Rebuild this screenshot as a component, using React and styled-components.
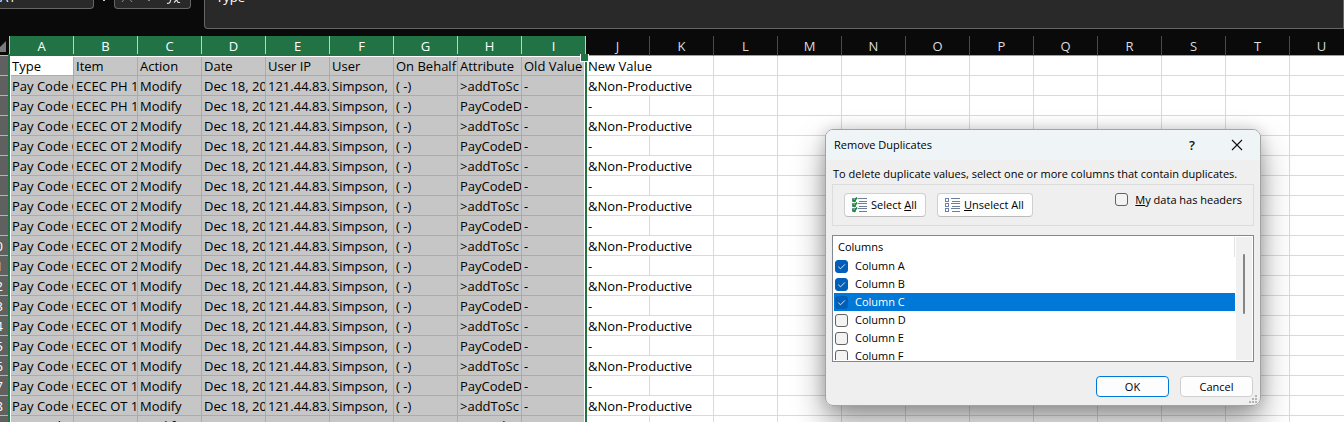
import styled, { createGlobalStyle } from 'styled-components';

const GlobalStyle = createGlobalStyle`
  :root {
    --excel-green: #217346;
    --chrome: #0a0a0a;
    --field: #292929;
    --field-border: #666666;
    --accent: #0078d7;
  }
  * {
    box-sizing: border-box;
  }
  body {
    margin: 0;
    background: #ffffff;
    overflow: hidden;
  }
`;

const Page = styled.main`
  position: relative;
  height: 100vh;
  overflow: hidden;
  font-family: 'Open Sans', 'Noto Sans', sans-serif;
`;

/* ---------- formula bar ---------- */

const FormulaBar = styled.header`
  display: flex;
  align-items: flex-start;
  height: 36px;
  background: var(--chrome);
`;

const Field = styled.div`
  display: flex;
  align-items: flex-end;
  flex: none;
  height: 9px;
  overflow: hidden;
  border: 1px solid var(--field-border);
  border-top: none;
  background: var(--field);
  color: #ffffff;
  font-size: 13px;
  line-height: 16px;
`;

const NameBox = styled(Field)`
  width: 94px;
  padding-bottom: 3px;
  border-left: none;
  border-radius: 0 0 4px 0;
`;

const FxBox = styled(Field)`
  width: 77px;
  margin-right: 13px;
  padding-left: 6px;
  border-radius: 0 0 4px 4px;
`;

const FormulaInput = styled(Field)`
  flex: 1;
  height: 29px;
  padding: 0 0 23px 11px;
  border-radius: 0 0 0 4px;
`;

const Dots = styled.div`
  width: 20px;
  height: 2px;
  display: flex;
  justify-content: center;
  &::after {
    content: '';
    width: 2px;
    height: 1px;
    background: #cccccc;
  }
`;

/* ---------- sheet ---------- */

const Sheet = styled.section`
  position: relative;
  overflow: hidden;
`;

const Grid = styled.table`
  table-layout: fixed;
  width: 1354px;
  border-collapse: separate;
  border-spacing: 0;
  color: #000000;
  font-size: 13px;
  line-height: 18px;
`;

const Corner = styled.th`
  height: 20px;
  padding: 0;
  background: var(--chrome);
  border-bottom: 1px solid #bdbdbd;
  border-right: 1px solid #bdbdbd;
  svg {
    display: block;
  }
`;

const ColumnHead = styled.th`
  height: 20px;
  padding: 1px 0 0;
  background: ${({ $active }) => ($active ? 'var(--excel-green)' : 'var(--chrome)')};
  border-bottom: 1px solid ${({ $active }) => ($active ? 'var(--excel-green)' : '#a0a0a0')};
  border-right: 1px solid ${({ $active }) => ($active ? '#b9d3c5' : '#4a4a4a')};
  color: ${({ $active }) => ($active ? '#ffffff' : '#dcdcdc')};
  font-weight: 400;
`;

const RowHead = styled.th`
  height: 20px;
  padding: 1px 0 0;
  overflow: hidden;
  background: #606060;
  border-bottom: 1px solid #b4b4b4;
  border-right: 1px solid var(--excel-green);
  color: #ffffff;
  font-weight: 400;
  div {
    display: flex;
    justify-content: flex-end;
  }
  span {
    flex: none;
    width: 27px;
    text-align: center;
  }
`;

const Cell = styled.td`
  height: 20px;
  padding: 1px 0 0 2px;
  overflow: hidden;
  white-space: nowrap;
  background: ${({ $picked, $origin }) => ($picked && !$origin ? '#c6c6c6' : '#ffffff')};
  border-right: 1px solid ${({ $picked }) => ($picked ? '#ababab' : '#dadada')};
  border-bottom: 1px solid ${({ $picked }) => ($picked ? '#ababab' : '#dadada')};
`;

const Selection = styled.div`
  position: absolute;
  top: 18px;
  bottom: -4px;
  left: 8px;
  width: 579px;
  border: 2px solid var(--excel-green);
  box-shadow: inset 0 0 0 1px #ffffff;
  pointer-events: none;
  &::after {
    content: '';
    position: absolute;
    top: -2px;
    right: -4px;
    width: 7px;
    height: 7px;
    border: 1px solid #ffffff;
    border-top: none;
    background: var(--excel-green);
  }
`;

/* ---------- dialog ---------- */

const DialogFrame = styled.div`
  position: absolute;
  top: 129px;
  left: 825px;
  width: 436px;
  border-radius: 8px;
  box-shadow: 0 16px 32px rgba(0, 0, 0, 0.4), 0 0 14px rgba(0, 0, 0, 0.16);
`;

const Dialog = styled.section`
  position: relative;
  overflow: hidden;
  border: 1px solid #a3a3a3;
  border-radius: 8px;
  background: #efefef;
  color: #000000;
  font-size: 11px;
  line-height: 16px;
`;

const TitleBar = styled.header`
  display: flex;
  align-items: center;
  height: 30px;
  padding: 0 16px 0 8px;
  background: #eff4f7;
  h1 {
    flex: 1;
    margin: 0;
    font-size: 11px;
    font-weight: 400;
  }
`;

const TitleButton = styled.button`
  display: flex;
  align-items: center;
  justify-content: center;
  width: 14px;
  height: 20px;
  margin-left: ${({ $apart }) => ($apart ? '31px' : '0')};
  padding: 0;
  border: none;
  background: none;
  color: #111111;
  font: 600 13px 'Open Sans', sans-serif;
`;

const DialogBody = styled.div`
  padding: 6px 6px 8px;
`;

const Hint = styled.p`
  margin: 0 0 2px;
  padding-left: 1px;
  white-space: nowrap;
`;

const Tools = styled.div`
  display: flex;
  align-items: flex-start;
  gap: 11px;
  height: 42px;
  margin-bottom: 9px;
  padding: 8px 11px;
  border: 1px solid #dcdcdc;
`;

const ToolButton = styled.button`
  display: flex;
  align-items: center;
  gap: 3px;
  height: 24px;
  width: ${({ $wide }) => ($wide ? '96px' : '82px')};
  padding: 0 7px;
  border: 1px solid #cfcfcf;
  border-bottom-color: #bcbcbc;
  border-radius: 4px;
  background: #fdfdfd;
  color: #000000;
  font: inherit;
  white-space: nowrap;
  svg {
    flex: none;
  }
`;

const Check = styled.input`
  appearance: none;
  flex: none;
  width: 13px;
  height: 13px;
  margin: 0;
  border: 1px solid #626262;
  border-radius: 3px;
  background: #f3f3f3;
  &:checked {
    border-color: #005fb8;
    background: #005fb8
      url("data:image/svg+xml,%3Csvg xmlns='http://www.w3.org/2000/svg' viewBox='0 0 11 11'%3E%3Cpath d='M2.3 5.7 4.5 7.8 8.9 3.4' fill='none' stroke='white' stroke-opacity='.85'/%3E%3C/svg%3E");
  }
`;

const HeadersOption = styled.label`
  display: flex;
  gap: 7px;
  margin-left: auto;
  white-space: nowrap;
  span {
    line-height: 14px;
  }
`;

const ListBox = styled.div`
  display: flex;
  height: 127px;
  padding: 1px;
  border: 1px solid #828790;
  background: #ffffff;
`;

const List = styled.div`
  flex: 1;
  overflow: hidden;
`;

const ListTitle = styled.div`
  height: 20px;
  padding-left: 4px;
  border-right: 1px solid #e2e2e2;
  line-height: 20px;
`;

const Option = styled.label`
  display: flex;
  align-items: center;
  gap: 7px;
  height: 18px;
  padding-left: 1px;
  background: ${({ $current }) => ($current ? 'var(--accent)' : 'transparent')};
  color: ${({ $current }) => ($current ? '#ffffff' : '#000000')};
`;

const ScrollTrack = styled.div`
  display: flex;
  justify-content: center;
  width: 16px;
  margin-left: 1px;
  padding-top: 17px;
  background: #f0f0f0;
  &::after {
    content: '';
    width: 2px;
    height: 60px;
    border-radius: 1px;
    background: #858585;
  }
`;

const Actions = styled.footer`
  display: flex;
  justify-content: flex-end;
  gap: 11px;
  padding: 14px 1px 0 0;
`;

const ActionButton = styled.button`
  width: 73px;
  height: 21px;
  padding: 0;
  border: 1px solid ${({ $primary }) => ($primary ? 'var(--accent)' : '#cfcfcf')};
  border-radius: 4px;
  background: #fdfdfd;
  color: #000000;
  font: inherit;
`;

const Grip = styled.svg`
  position: absolute;
  right: 2px;
  bottom: 1px;
`;

const letters = 'ABCDEFGHIJKLMNOPQRSTU'.split('');
const picked = 9;

const headings = [
  'Type',
  'Item',
  'Action',
  'Date',
  'User IP',
  'User',
  'On Behalf',
  'Attribute',
  'Old Value',
  'New Value',
];

const itemFor = (i) => {
  if (i < 2) return 'ECEC PH 1.';
  return i < 10 ? 'ECEC OT 2.' : 'ECEC OT 1.';
};

const records = Array.from({ length: 18 }, (_, i) => [
  'Pay Code C',
  itemFor(i),
  'Modify',
  'Dec 18, 20',
  '121.44.83.',
  'Simpson,',
  '( -)',
  i % 2 ? 'PayCodeD' : '>addToSc',
  '-',
  i % 2 ? '-' : '&Non-Productive',
]);

const rows = [headings, ...records];

const ListIcon = ({ checked }) => (
  <svg width="16" height="16" viewBox="0 0 16 16" aria-hidden="true">
    {[1, 6, 11].map((y) => (
      <g key={y}>
        <rect
          x="0.5"
          y={y + 0.5}
          width="3"
          height="3"
          fill="#ffffff"
          stroke={checked ? '#7d93a6' : '#6b7fb5'}
        />
        <path d={`M6 ${y + 0.5}h9M7 ${y + 3.5}h8`} stroke="#6a7f9c" />
        {checked && (
          <path
            d={`M.6 ${y + 1.2}l1.6 2L5 ${y - 0.4}`}
            fill="none"
            stroke="#0c8f2b"
            strokeWidth="1.7"
          />
        )}
      </g>
    ))}
  </svg>
);

const SheetRow = ({ values, index }) => {
  // text longer than a column runs over the empty one beside it
  const spills = values[9].length > 1;
  const empty = letters.slice(spills ? 11 : 10);
  return (
    <tr>
      <RowHead scope="row">
        <div>
          <span>{index + 1}</span>
        </div>
      </RowHead>
      {values.map((value, col) => (
        <Cell
          key={letters[col]}
          $picked={col < picked}
          $origin={index === 0 && col === 0}
          colSpan={col === 9 && spills ? 2 : 1}
        >
          {value}
        </Cell>
      ))}
      {empty.map((letter) => (
        <Cell key={letter} />
      ))}
    </tr>
  );
};

const App = () => {
  return (
    <Page>
      <GlobalStyle />
      <FormulaBar>
        <NameBox>A1</NameBox>
        <Dots />
        <FxBox>
          <svg width="64" height="8" viewBox="0 0 64 8" aria-hidden="true">
            <path d="M1 2 4-2M11 2 7-3" stroke="#8a8a8a" fill="none" />
            <path d="M26-1l2 2 4-4" stroke="#8a8a8a" fill="none" />
            <path
              d="M46 3.2q2.6.8 3.4-2L50-2M53 2.5l5-5M54.5-2l2.6 4.5h2"
              stroke="#e0e0e0"
              strokeWidth="1.2"
              fill="none"
            />
          </svg>
        </FxBox>
        <FormulaInput>Type</FormulaInput>
      </FormulaBar>

      <Sheet>
        <Grid>
          <colgroup>
            <col width="10" />
            {letters.map((letter) => (
              <col key={letter} width="64" />
            ))}
          </colgroup>
          <thead>
            <tr>
              <Corner>
                <svg width="9" height="19" viewBox="0 0 9 19" aria-hidden="true">
                  <path d="M6 5v11H-5z" fill="#7a7a7a" />
                </svg>
              </Corner>
              {letters.map((letter, i) => (
                <ColumnHead key={letter} scope="col" $active={i < picked}>
                  {letter}
                </ColumnHead>
              ))}
            </tr>
          </thead>
          <tbody>
            {rows.map((values, i) => (
              <SheetRow key={i} values={values} index={i} />
            ))}
          </tbody>
        </Grid>
        <Selection />
      </Sheet>

      <DialogFrame>
        <Dialog role="dialog" aria-labelledby="dialog-title">
          <TitleBar>
            <h1 id="dialog-title">Remove Duplicates</h1>
            <TitleButton type="button" aria-label="Help">
              ?
            </TitleButton>
            <TitleButton type="button" aria-label="Close" $apart>
              <svg width="12" height="12" viewBox="0 0 12 12" aria-hidden="true">
                <path d="M1 1l10 10M11 1 1 11" stroke="#111111" strokeWidth="1.1" />
              </svg>
            </TitleButton>
          </TitleBar>
          <DialogBody>
            <Hint>
              To delete duplicate values, select one or more columns that contain duplicates.
            </Hint>
            <Tools>
              <ToolButton type="button">
                <ListIcon checked />
                <span>
                  Select <u>A</u>ll
                </span>
              </ToolButton>
              <ToolButton type="button" $wide>
                <ListIcon />
                <span>
                  <u>U</u>nselect All
                </span>
              </ToolButton>
              <HeadersOption>
                <Check type="checkbox" />
                <span>
                  <u>M</u>y data has headers
                </span>
              </HeadersOption>
            </Tools>
            <ListBox>
              <List>
                <ListTitle>Columns</ListTitle>
                {letters.slice(0, 6).map((letter, i) => (
                  <Option key={letter} $current={letter === 'C'}>
                    <Check type="checkbox" defaultChecked={i < 3} />
                    Column {letter}
                  </Option>
                ))}
              </List>
              <ScrollTrack />
            </ListBox>
            <Actions>
              <ActionButton type="button" $primary>
                OK
              </ActionButton>
              <ActionButton type="button">Cancel</ActionButton>
            </Actions>
          </DialogBody>
          <Grip width="9" height="9" viewBox="0 0 9 9" aria-hidden="true">
            <path
              d="M6 0h2v2h-2zM3 3h2v2h-2zM6 3h2v2h-2zM0 6h2v2h-2zM3 6h2v2h-2zM6 6h2v2h-2z"
              fill="#b4b4b4"
            />
          </Grip>
        </Dialog>
      </DialogFrame>
    </Page>
  );
};

export default App;
